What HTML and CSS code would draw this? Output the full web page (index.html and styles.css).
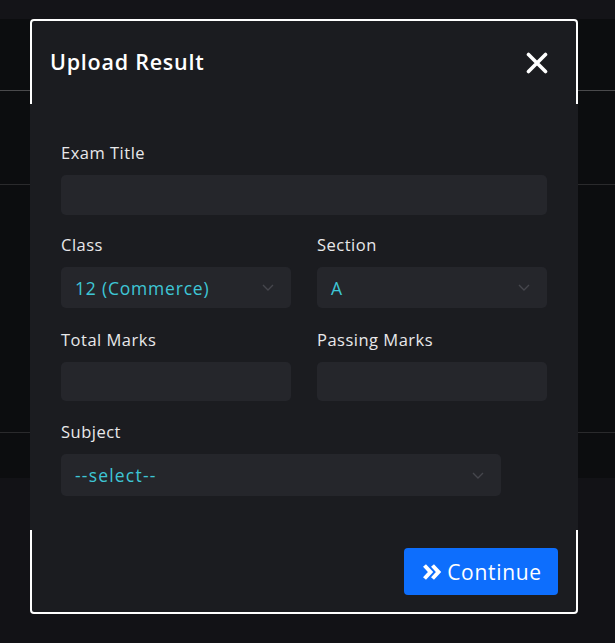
FILE: index.html
```html
<!DOCTYPE html>
<html lang="en">
<head>
<meta charset="utf-8">
<title>Upload Result</title>
<link rel="stylesheet" href="styles.css">
</head>
<body>
<div class="page">
  <div class="topbar"></div>
  <div class="backdrop-area">
    <div class="bg-row r1"></div>
    <div class="bg-row r2"></div>
    <div class="bg-row r3"></div>
    <div class="bg-row r4"></div>
  </div>
  <div class="bottom-area"></div>
</div>

<div class="modal">
  <div class="modal-header">
    <h2 class="modal-title">Upload Result</h2>
    <button class="close-btn" aria-label="Close">
      <svg width="22" height="22" viewBox="0 0 22 22"><path d="M2.5 2.5 L19.5 19.5 M19.5 2.5 L2.5 19.5" stroke="#ffffff" stroke-width="3.6" stroke-linecap="round" fill="none"/></svg>
    </button>
  </div>
  <div class="modal-body">
    <div class="field">
      <label class="label">Exam Title</label>
      <div class="input"></div>
    </div>
    <div class="grid">
      <div class="field">
        <label class="label">Class</label>
        <div class="select"><span class="value">12 (Commerce)</span><svg class="chev" width="12" height="7" viewBox="0 0 12 7"><path d="M1 1 L6 6 L11 1" stroke="#45464c" stroke-width="1.4" fill="none"/></svg></div>
      </div>
      <div class="field">
        <label class="label">Section</label>
        <div class="select"><span class="value">A</span><svg class="chev" width="12" height="7" viewBox="0 0 12 7"><path d="M1 1 L6 6 L11 1" stroke="#45464c" stroke-width="1.4" fill="none"/></svg></div>
      </div>
      <div class="field">
        <label class="label">Total Marks</label>
        <div class="input short"></div>
      </div>
      <div class="field">
        <label class="label">Passing Marks</label>
        <div class="input short"></div>
      </div>
    </div>
    <div class="field subject">
      <label class="label">Subject</label>
      <div class="select tall"><span class="value dashed">--select--</span><svg class="chev" width="12" height="7" viewBox="0 0 12 7"><path d="M1 1 L6 6 L11 1" stroke="#45464c" stroke-width="1.4" fill="none"/></svg></div>
    </div>
  </div>
  <div class="modal-footer">
    <button class="btn-primary">
      <svg width="20" height="18" viewBox="0 0 20 18"><path d="M2.5 2.5 L8.5 9 L2.5 15.5 M10.5 2.5 L16.5 9 L10.5 15.5" stroke="#ffffff" stroke-width="4" stroke-linejoin="miter" stroke-linecap="butt" fill="none"/></svg>
      <span>Continue</span>
    </button>
  </div>
</div>
</body>
</html>
```

FILE: styles.css
```css
* { box-sizing: border-box; }
html, body { margin: 0; padding: 0; }
body {
  width: 615px;
  height: 643px;
  overflow: hidden;
  background: #121216;
  font-family: "Open Sans", "Liberation Sans", sans-serif;
  position: relative;
}
.page { display: flex; flex-direction: column; height: 643px; }
.topbar { height: 19px; background: #141418; }
.backdrop-area { height: 459px; background: #0c0d0f; display: flex; flex-direction: column; }
.bg-row { border-bottom: 1px solid #2a2a2c; }
.r1 { height: 72px; border-bottom-color: #4a4a4c; }
.r2 { height: 94px; }
.r3 { height: 248px; }
.r4 { height: 0; border: none; }
.bottom-area { flex: 1; background: #121216; }

.modal {
  position: absolute;
  left: 30px;
  top: 19px;
  width: 548px;
  height: 595px;
  border: 2px solid #ffffff;
  border-radius: 4px;
  background: #1b1c20;
  display: flex;
  flex-direction: column;
}
.modal-header {
  height: 83px;
  display: flex;
  align-items: center;
  justify-content: space-between;
  padding: 0 28px 0 18px;
}
.modal-title {
  margin: 0 0 3px 0;
  color: #ffffff;
  font-size: 21.5px;
  font-weight: 600;
  letter-spacing: 0.75px;
}
.close-btn {
  background: none;
  border: none;
  padding: 0;
  width: 22px;
  height: 22px;
  display: flex;
}
.modal-body {
  margin: 0 -2px;
  height: 426px;
  background: #1b1c20;
  padding: 37px 31px 0 31px;
}
.field { display: flex; flex-direction: column; }
.label {
  color: #e8e8ea;
  font-size: 16.5px;
  font-weight: 500;
  letter-spacing: 0.5px;
  line-height: 24px;
  height: 24px;
  margin-bottom: 10px;
}
.input {
  height: 40px;
  background: #25262b;
  border-radius: 5px;
}
.input.short { height: 39px; }
.grid {
  display: grid;
  grid-template-columns: 230px 230px;
  column-gap: 26px;
  row-gap: 20px;
  margin-top: 18px;
}
.select {
  height: 41px;
  background: #25262b;
  border-radius: 5px;
  display: flex;
  align-items: center;
  justify-content: space-between;
  padding: 0 17px 0 14px;
}
.select.tall { height: 42px; }
.value {
  color: #3ec6d6;
  font-size: 17.5px;
  letter-spacing: 0.8px;
}
.value.dashed { letter-spacing: 1.2px; }
.subject { margin-top: 19px; width: 440px; }
.modal-footer {
  flex: 1;
  display: flex;
  justify-content: flex-end;
  align-items: flex-start;
  padding: 18px 18px 0 0;
}
.btn-primary {
  width: 154px;
  height: 47px;
  background: #0d6efd;
  border: none;
  border-radius: 4px;
  color: #ffffff;
  font-family: "Open Sans", "Liberation Sans", sans-serif;
  font-size: 21px;
  letter-spacing: 0.7px;
  display: flex;
  align-items: center;
  justify-content: center;
  gap: 5px;
  padding: 0 10px 0 12px;
}
```
